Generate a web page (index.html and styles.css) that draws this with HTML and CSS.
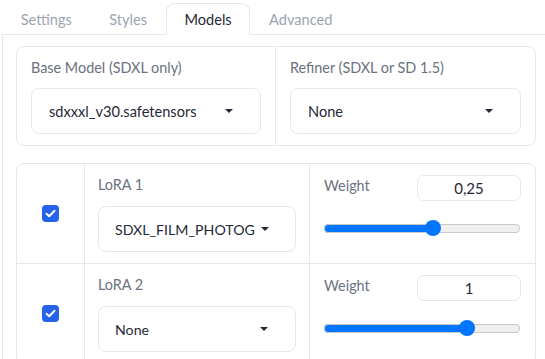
FILE: index.html
```html
<!DOCTYPE html>
<html>
<head>
<meta name="viewport" content="width=device-width, initial-scale=1">
<link rel="stylesheet" href="styles.css">
</head>
<body>

<div class="tabs">
  <div class="tab-nav">
    <button class="tab">Settings</button>
    <button class="tab">Styles</button>
    <button class="tab active">Models</button>
    <button class="tab">Advanced</button>
  </div>

  <div class="tab-panel">
    <!-- model pickers -->
    <div class="card models">
      <div class="field">
        <div class="label">Base Model (SDXL only)</div>
        <div class="dropdown"><span class="value">sdxxxl_v30.safetensors</span><span class="caret"></span></div>
      </div>
      <div class="field divided">
        <div class="label">Refiner (SDXL or SD 1.5)</div>
        <div class="dropdown"><span class="value">None</span><span class="caret"></span></div>
      </div>
    </div>

    <!-- loras -->
    <div class="card loras">
      <div class="lora-row">
        <div class="check-cell">
          <span class="checkbox"><svg width="11" height="9" viewBox="0 0 11 9"><path d="M1.5 4.8 L4.2 7.2 L9.5 1.8" fill="none" stroke="#fff" stroke-width="2" stroke-linecap="round" stroke-linejoin="round"/></svg></span>
        </div>
        <div class="field lora divided">
          <div class="label">LoRA 1</div>
          <div class="dropdown"><span class="value">SDXL_FILM_PHOTOG</span><span class="caret"></span></div>
        </div>
        <div class="weight divided">
          <div class="weight-head">
            <span class="label">Weight</span>
            <input class="num" type="text" value="0,25">
          </div>
          <input class="slider" type="range" min="-2" max="2" step="0.05" value="0.25" style="--fill: 56%">
        </div>
      </div>
      <div class="lora-row">
        <div class="check-cell">
          <span class="checkbox"><svg width="11" height="9" viewBox="0 0 11 9"><path d="M1.5 4.8 L4.2 7.2 L9.5 1.8" fill="none" stroke="#fff" stroke-width="2" stroke-linecap="round" stroke-linejoin="round"/></svg></span>
        </div>
        <div class="field lora divided">
          <div class="label">LoRA 2</div>
          <div class="dropdown"><span class="value">None</span><span class="caret"></span></div>
        </div>
        <div class="weight divided">
          <div class="weight-head">
            <span class="label">Weight</span>
            <input class="num" type="text" value="1">
          </div>
          <input class="slider" type="range" min="-2" max="2" step="0.05" value="1" style="--fill: 73.3%">
        </div>
      </div>
    </div>
  </div>
</div>

</body>
</html>
```

FILE: styles.css
```css
html, body {
  overflow: hidden;
}

body {
  margin: 0;
  padding: 3px 0 0 2px;
  font-family: Lato, "Liberation Sans", sans-serif;
  font-size: 14.5px;
  color: #1f2937;
  background: #fff;
}

.tabs {
  width: 547px;
}

/* tab strip */
.tab-nav {
  display: flex;
  border-bottom: 1px solid #e5e7eb;
}

.tab {
  height: 32px;
  margin-bottom: -1px;
  padding: 0 17.7px;
  border: 1px solid transparent;
  border-bottom: none;
  border-radius: 8px 8px 0 0;
  background: none;
  font-family: inherit;
  font-size: 14.6px;
  color: #9ca3af;
  cursor: pointer;
}

.tab.active {
  border-color: #e5e7eb;
  background: #fff;
  color: #1f2937;
}

.tab-panel {
  height: 313px;
  overflow: hidden;
  padding: 11px 13px 0;
  border-left: 1px solid #e5e7eb;
}

/* cards */
.card {
  border: 1px solid #e5e7eb;
  border-radius: 8px;
  background: #fff;
}

.models {
  display: grid;
  grid-template-columns: 258px 1fr;
}

.divided {
  border-left: 1px solid #e5e7eb;
}

.field {
  padding: 11px 14px;
}

.label {
  line-height: 20px;
  font-size: 14.4px;
  color: #6b7280;
}

.dropdown {
  display: flex;
  align-items: center;
  height: 46px;
  margin-top: 10px;
  padding: 0 27px 0 17px;
  border: 1px solid #e5e7eb;
  border-radius: 8px;
  box-sizing: border-box;
  background: #fff;
}

.dropdown .value {
  flex: 1;
  white-space: nowrap;
  font-size: 14.6px;
  color: #1f2937;
}

.caret {
  flex: none;
  margin-left: 6px;
  border-left: 4px solid transparent;
  border-right: 4px solid transparent;
  border-top: 4.5px solid #1f2937;
}

.loras {
  margin-top: 17px;
}

.lora-row {
  display: grid;
  grid-template-columns: 67px 225px 1fr;
}

.lora-row + .lora-row {
  border-top: 1px solid #e5e7eb;
}

.check-cell {
  display: flex;
  align-items: center;
  justify-content: center;
}

.checkbox {
  display: flex;
  align-items: center;
  justify-content: center;
  width: 17px;
  height: 17px;
  border-radius: 4px;
  background: #2563eb;
}

.field.lora {
  padding: 11px 13px;
}

.field.lora .dropdown {
  margin-top: 11px;
  padding-left: 16px;
}

.field.lora .value {
  font-size: 14.2px;
}

.weight {
  padding: 11px 14px 0;
}

.weight-head {
  display: flex;
  justify-content: space-between;
  align-items: flex-start;
}

.weight-head .label {
  padding-top: 1px;
}

.num {
  width: 104px;
  height: 26px;
  box-sizing: border-box;
  border: 1px solid #e5e7eb;
  border-radius: 7px;
  font-family: inherit;
  font-size: 15px;
  color: #1f2937;
  text-align: center;
  outline: none;
}

.slider {
  -webkit-appearance: none;
  appearance: none;
  display: block;
  width: 196px;
  height: 16px;
  margin: 19px 0 0;
  background: transparent;
}

.slider::-webkit-slider-runnable-track {
  height: 9px;
  border-radius: 5px;
  background: linear-gradient(to right, #0075ff var(--fill), #efefef var(--fill));
  box-shadow: inset 0 0 0 1px #c9c9c9;
}

.slider::-webkit-slider-thumb {
  -webkit-appearance: none;
  width: 16px;
  height: 16px;
  margin-top: -3.5px;
  border-radius: 50%;
  background: #0075ff;
}
```
